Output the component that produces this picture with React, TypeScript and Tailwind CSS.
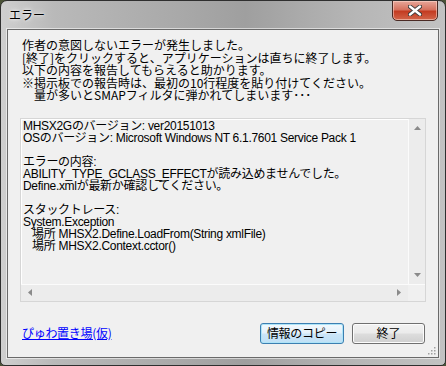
import React from "react";

const message = [
  "作者の意図しないエラーが発生しました。",
  "[終了]をクリックすると、アプリケーションは直ちに終了します。",
  "以下の内容を報告してもらえると助かります。",
  "※掲示板での報告時は、最初の10行程度を貼り付けてください。",
  "　量が多いとSMAPフィルタに弾かれてしまいます･･･",
];

const details = [
  "MHSX2Gのバージョン: ver20151013",
  "OSのバージョン: Microsoft Windows NT 6.1.7601 Service Pack 1",
  "",
  "エラーの内容:",
  "ABILITY_TYPE_GCLASS_EFFECTが読み込めませんでした。",
  "Define.xmlが最新か確認してください。",
  "",
  "スタックトレース:",
  "System.Exception",
  "   場所 MHSX2.Define.LoadFrom(String xmlFile)",
  "   場所 MHSX2.Context.cctor()",
];

function Arrow({ dir }: { dir: "up" | "down" | "left" | "right" }) {
  const pts = {
    up: "0,4 3.5,0 7,4",
    down: "0,0 3.5,4 7,0",
    left: "4,0 0,3.5 4,7",
    right: "0,0 4,3.5 0,7",
  }[dir];
  const vertical = dir === "up" || dir === "down";
  return (
    <svg width={vertical ? 7 : 4} height={vertical ? 4 : 7} viewBox={vertical ? "0 0 7 4" : "0 0 4 7"}>
      <polygon points={pts} fill="#8a8a8a" />
    </svg>
  );
}

export default function App() {
  return (
    <div className="w-[446px] h-[366px] bg-[#4a5236] font-['Noto_Sans_CJK_JP',sans-serif] text-[12px] text-black">
      <div className="relative w-full h-full flex flex-col rounded-t-[7px] rounded-b-[5px] border border-[#2f2f2f] bg-[linear-gradient(90deg,#cfcfcf_0%,#b9b9b9_12%,#a9a9a9_40%,#9f9f9f_55%,#b6b6b6_80%,#c2c2c2_100%)] px-[6px] pb-[7px] overflow-hidden">
        {/* title bar */}
        <div className="h-[28px] flex items-center pl-[2px] shrink-0">
          <span className="leading-none text-[12px] [text-shadow:0_0_6px_#ffffff,0_0_3px_#ffffff]">エラー</span>
        </div>

        {/* close button */}
        <div className="absolute top-[-1px] right-[7px] w-[46px] h-[21px] rounded-b-[5px] border border-[#4a2a24] bg-[linear-gradient(180deg,#e7a79a_0%,#d6725f_45%,#c43c22_55%,#d2654a_100%)] shadow-[inset_0_0_0_1px_rgba(255,220,210,0.55)] flex items-center justify-center">
          <svg width="14" height="11" viewBox="0 0 14 11">
            <path d="M2 1.5 L12 9.5 M12 1.5 L2 9.5" stroke="#3b3b3b" strokeWidth="4.2" strokeLinecap="round" />
            <path d="M2 1.5 L12 9.5 M12 1.5 L2 9.5" stroke="#ffffff" strokeWidth="2.4" strokeLinecap="round" />
          </svg>
        </div>

        {/* client area */}
        <div className="relative flex-1 flex flex-col bg-[#f0f0f0] border border-[#6a6a6a] shadow-[0_0_0_1px_rgba(255,255,255,0.55)]">
          <div className="pl-[14px] pt-[9px] leading-[12.5px] whitespace-pre">
            {message.map((l) => (
              <div key={l}>{l}</div>
            ))}
          </div>

          {/* textbox */}
          <div className="ml-[12px] mt-[16px] w-[406px] h-[184px] border border-[#d6d6d6] shadow-[inset_0_0_0_1px_#ffffff] flex flex-col">
            <div className="flex-1 flex min-h-0">
              <div className="flex-1 pl-[2px] pt-[1px] leading-[12px] whitespace-pre font-['Liberation_Sans','Noto_Sans_CJK_JP',sans-serif] text-[12px] tracking-[-0.3px] overflow-hidden">
                {details.map((l, i) => (
                  <div key={i} className="h-[12px]">{l}</div>
                ))}
              </div>
              <div className="w-[17px] border-l border-[#fbfbfb] bg-[#ececec] flex flex-col items-center justify-between py-[7px]">
                <Arrow dir="up" />
                <Arrow dir="down" />
              </div>
            </div>
            <div className="h-[17px] flex border-t border-[#fbfbfb]">
              <div className="flex-1 bg-[#ececec] flex items-center justify-between px-[7px]">
                <Arrow dir="left" />
                <Arrow dir="right" />
              </div>
              <div className="w-[17px] bg-[#f0f0f0]" />
            </div>
          </div>

          {/* footer */}
          <div className="flex items-center mt-[21px] pl-[14px] pr-[13px]">
            <a className="text-[#0000ff] underline leading-none tracking-[-0.3px]">ぴゅわ置き場(仮)</a>
            <div className="flex-1" />
            <button className="w-[84px] h-[21px] rounded-[3px] border border-[#3c7fb1] bg-[linear-gradient(180deg,#f2f9fd_0%,#e4f1fa_48%,#cbe5f7_52%,#bfe0f6_100%)] shadow-[inset_0_0_0_1px_#aee4f8] leading-none tracking-[-0.3px]">
              情報のコピー
            </button>
            <button className="ml-[8px] w-[73px] h-[21px] rounded-[3px] border border-[#707070] bg-[linear-gradient(180deg,#f2f2f2_0%,#ebebeb_48%,#dddddd_52%,#cfcfcf_100%)] shadow-[inset_0_0_0_1px_#fcfcfc] leading-none">
              終了
            </button>
          </div>

          {/* size grip */}
          <svg className="absolute right-[2px] bottom-[2px]" width="10" height="10" viewBox="0 0 10 10">
            {[[8, 2], [8, 5], [5, 5], [8, 8], [5, 8], [2, 8]].map(([x, y]) => (
              <rect key={`${x}-${y}`} x={x} y={y} width="1.5" height="1.5" fill="#a0a0a0" />
            ))}
          </svg>
        </div>
      </div>
    </div>
  );
}
